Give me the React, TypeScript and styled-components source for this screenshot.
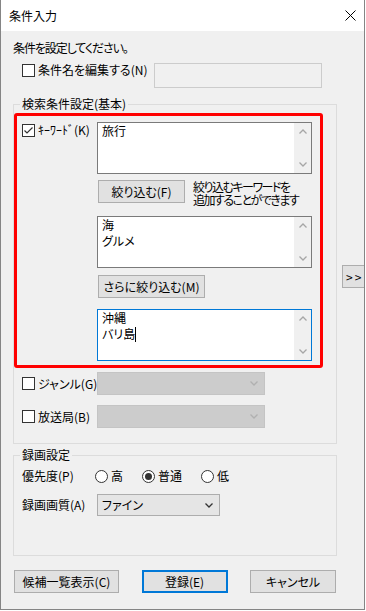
import styled, { createGlobalStyle } from 'styled-components';

const GlobalStyle = createGlobalStyle`
  * { box-sizing: border-box; }
  html, body {
    margin: 0;
    padding: 0;
    background: #ffffff;
  }
  body {
    font-family: 'Noto Sans CJK JP', 'Noto Sans', sans-serif;
    font-size: 12px;
    color: #000;
    font-feature-settings: 'palt';
  }
`;

const Window = styled.div`
  width: 365px;
  height: 610px;
  border: 1px solid #858585;
  border-top: none;
  overflow: hidden;
  display: flex;
  flex-direction: column;
`;

const TitleBar = styled.div`
  height: 31px;
  flex-shrink: 0;
  background: #ffffff;
  display: flex;
  align-items: center;
  justify-content: space-between;
  padding: 0 8px 0 8px;
  line-height: 14px;
`;

const Body = styled.div`
  flex: 1;
  background: #f0f0f0;
  padding: 10px 0 0 12px;
  display: flex;
  flex-direction: column;
`;

const Line = styled.div`
  line-height: 14px;
  letter-spacing: -1.1px;
`;

const Row = styled.div<{ $mt?: number; $pl?: number; $align?: string }>`
  display: flex;
  align-items: ${(p) => p.$align ?? 'center'};
  margin-top: ${(p) => p.$mt ?? 0}px;
  padding-left: ${(p) => p.$pl ?? 0}px;
`;

const LabelCol = styled.div<{ $w: number; $mt?: number }>`
  width: ${(p) => p.$w}px;
  flex-shrink: 0;
  margin-top: ${(p) => p.$mt ?? 0}px;
  line-height: 14px;
`;

const CheckLabel = styled.label`
  display: flex;
  align-items: center;
  height: 14px;
  line-height: 14px;
  white-space: nowrap;
`;

const Box = styled.span`
  width: 13px;
  height: 13px;
  border: 1px solid #333333;
  background: #ffffff;
  margin-right: 3px;
  flex-shrink: 0;
  display: flex;
  align-items: center;
  justify-content: center;
`;

const Check = ({ checked }: { checked?: boolean }) => (
  <Box>
    {checked && (
      <svg width="11" height="11" viewBox="0 0 11 11">
        <polyline points="1.5,5.5 4,8 9.5,2.5" fill="none" stroke="#333" strokeWidth="1.2" />
      </svg>
    )}
  </Box>
);

const NameInput = styled.div`
  width: 168px;
  height: 25px;
  margin-left: 7px;
  border: 1px solid #cccccc;
  background: #f0f0f0;
`;

const GroupRow = styled.div`
  display: flex;
  align-items: flex-start;
  margin-top: 9px;
`;

const Group = styled.fieldset<{ $pt: number; $pb: number; $mt?: number }>`
  width: 324px;
  min-width: 0;
  flex-shrink: 0;
  margin: ${(p) => p.$mt ?? 0}px 0 0 0;
  padding: ${(p) => p.$pt}px 0 ${(p) => p.$pb}px 0;
  border: 1px solid #dcdcdc;
`;

const Legend = styled.legend`
  margin-left: 6px;
  padding: 0 2px;
  line-height: 14px;
  font-size: 12px;
`;

const RedFrame = styled.div`
  width: 309px;
  border: 3px solid #ff0000;
  border-radius: 3px;
  padding: 6px 0 4px 5px;
  display: flex;
  align-items: flex-start;
`;

const KeywordCol = styled.div`
  display: flex;
  flex-direction: column;
  align-items: flex-start;
`;

const TextBox = styled.div<{ $focus?: boolean; $mt?: number }>`
  width: 215px;
  height: 52px;
  margin-top: ${(p) => p.$mt ?? 0}px;
  border: 1px solid ${(p) => (p.$focus ? '#0078d7' : '#7a7a7a')};
  background: #ffffff;
  display: flex;
`;

const TextContent = styled.div`
  flex: 1;
  padding-left: 4px;
  line-height: 16px;
`;

const Caret = styled.span`
  display: inline-block;
  width: 1px;
  height: 15px;
  background: #000;
  vertical-align: -3px;
`;

const ScrollTrack = styled.div`
  width: 17px;
  background: #f0f0f0;
  display: flex;
  flex-direction: column;
  justify-content: space-between;
`;

const ArrowBox = styled.div`
  width: 17px;
  height: 17px;
  display: flex;
  align-items: center;
  justify-content: center;
`;

const Chevron = ({ up, color = '#a6a6a6' }: { up?: boolean; color?: string }) => (
  <svg width="8" height="5" viewBox="0 0 8 5">
    <polyline
      points={up ? '0.5,4.5 4,1 7.5,4.5' : '0.5,0.5 4,4 7.5,0.5'}
      fill="none"
      stroke={color}
      strokeWidth="1.3"
    />
  </svg>
);

const TextArea = ({ lines, focus, mt, caret }: { lines: string[]; focus?: boolean; mt?: number; caret?: boolean }) => (
  <TextBox $focus={focus} $mt={mt}>
    <TextContent>
      {lines.map((l, i) => (
        <div key={i}>
          {l}
          {caret && i === lines.length - 1 && <Caret />}
        </div>
      ))}
    </TextContent>
    <ScrollTrack>
      <ArrowBox>
        <Chevron up />
      </ArrowBox>
      <ArrowBox>
        <Chevron />
      </ArrowBox>
    </ScrollTrack>
  </TextBox>
);

const Button = styled.button<{ $w: number; $default?: boolean }>`
  width: ${(p) => p.$w}px;
  height: 23px;
  padding: 0;
  flex-shrink: 0;
  font-family: inherit;
  font-size: 12px;
  font-feature-settings: 'palt';
  color: #000;
  background: #e1e1e1;
  border: ${(p) => (p.$default ? '2px solid #0078d7' : '1px solid #adadad')};
  line-height: 14px;
`;

const FilterRow = styled.div<{ $mt: number }>`
  display: flex;
  align-items: flex-start;
  margin-top: ${(p) => p.$mt}px;
  padding-left: 1px;
`;

const Hint = styled.div`
  margin-left: 8px;
  line-height: 13px;
  letter-spacing: -1.5px;
  white-space: nowrap;
`;

const SideButton = styled.button`
  width: 30px;
  height: 23px;
  margin: 168px 0 0 5px;
  flex-shrink: 0;
  padding: 0 0 0 3px;
  text-align: left;
  font-family: inherit;
  font-size: 12px;
  letter-spacing: 2px;
  color: #000;
  background: #e1e1e1;
  border: 1px solid #adadad;
`;

const Combo = styled.div<{ $w: number; $h: number; $disabled?: boolean }>`
  width: ${(p) => p.$w}px;
  height: ${(p) => p.$h}px;
  border: 1px solid ${(p) => (p.$disabled ? '#c4c4c4' : '#adadad')};
  background: ${(p) => (p.$disabled ? '#cccccc' : '#e5e5e5')};
  display: flex;
  align-items: center;
  justify-content: space-between;
  padding: 0 6px 0 4px;
  line-height: 14px;
`;

const Radios = styled.div`
  display: flex;
  align-items: center;
  gap: 19px;
`;

const RadioItem = styled.label`
  display: flex;
  align-items: center;
  line-height: 14px;
`;

const Circle = styled.span<{ $on?: boolean }>`
  width: 13px;
  height: 13px;
  border-radius: 50%;
  border: 1px solid #333333;
  background: #ffffff;
  margin-right: 3px;
  display: flex;
  align-items: center;
  justify-content: center;
  &::after {
    content: '';
    width: 7px;
    height: 7px;
    border-radius: 50%;
    background: ${(p) => (p.$on ? '#333333' : 'transparent')};
  }
`;

const ButtonRow = styled.div`
  display: flex;
  justify-content: space-between;
  width: 322px;
  margin: 14px 0 0 1px;
`;

export default function App() {
  return (
    <>
      <GlobalStyle />
      <Window>
        <TitleBar>
          <span>条件入力</span>
          <svg width="11" height="11" viewBox="0 0 11 11">
            <line x1="0.5" y1="0.5" x2="10.5" y2="10.5" stroke="#000" strokeWidth="1" />
            <line x1="10.5" y1="0.5" x2="0.5" y2="10.5" stroke="#000" strokeWidth="1" />
          </svg>
        </TitleBar>
        <Body>
          <Line>条件を設定してください。</Line>
          <Row $mt={8} $pl={9} $align="flex-start">
            <CheckLabel>
              <Check />
              条件名を編集する(N)
            </CheckLabel>
            <NameInput />
          </Row>

          <GroupRow>
            <Group $pt={2} $pb={15}>
              <Legend>検索条件設定(基本)</Legend>
              <RedFrame>
                <LabelCol $w={75} $mt={1}>
                  <CheckLabel>
                    <Check checked />
                    ｷｰﾜｰﾄﾞ(K)
                  </CheckLabel>
                </LabelCol>
                <KeywordCol>
                  <TextArea lines={['旅行']} />
                  <FilterRow $mt={6}>
                    <Button $w={87}>絞り込む(F)</Button>
                    <Hint>
                      絞り込むキーワードを
                      <br />
                      追加することができます
                    </Hint>
                  </FilterRow>
                  <TextArea lines={['海', 'グルメ']} mt={10} />
                  <FilterRow $mt={7}>
                    <Button $w={107}>さらに絞り込む(M)</Button>
                  </FilterRow>
                  <TextArea lines={['沖縄', 'バリ島']} mt={11} focus caret />
                </KeywordCol>
              </RedFrame>
              <Row $mt={4} $pl={8}>
                <LabelCol $w={75}>
                  <CheckLabel>
                    <Check />
                    ジャンル(G)
                  </CheckLabel>
                </LabelCol>
                <Combo $w={168} $h={23} $disabled>
                  <span />
                  <Chevron color="#b0b0b0" />
                </Combo>
              </Row>
              <Row $mt={10} $pl={8}>
                <LabelCol $w={75}>
                  <CheckLabel>
                    <Check />
                    放送局(B)
                  </CheckLabel>
                </LabelCol>
                <Combo $w={168} $h={23} $disabled>
                  <span />
                  <Chevron color="#b0b0b0" />
                </Combo>
              </Row>
            </Group>
            <SideButton>&gt;&gt;</SideButton>
          </GroupRow>

          <Group $pt={7} $pb={39} $mt={4}>
            <Legend>録画設定</Legend>
            <Row $pl={8}>
              <LabelCol $w={73}>優先度(P)</LabelCol>
              <Radios>
                <RadioItem>
                  <Circle />高
                </RadioItem>
                <RadioItem>
                  <Circle $on />普通
                </RadioItem>
                <RadioItem>
                  <Circle />低
                </RadioItem>
              </Radios>
            </Row>
            <Row $mt={11} $pl={8}>
              <LabelCol $w={75}>録画画質(A)</LabelCol>
              <Combo $w={123} $h={22}>
                <span>ファイン</span>
                <Chevron color="#333333" />
              </Combo>
            </Row>
          </Group>

          <ButtonRow>
            <Button $w={105}>候補一覧表示(C)</Button>
            <Button $w={86} $default>
              登録(E)
            </Button>
            <Button $w={86}>キャンセル</Button>
          </ButtonRow>
        </Body>
      </Window>
    </>
  );
}
